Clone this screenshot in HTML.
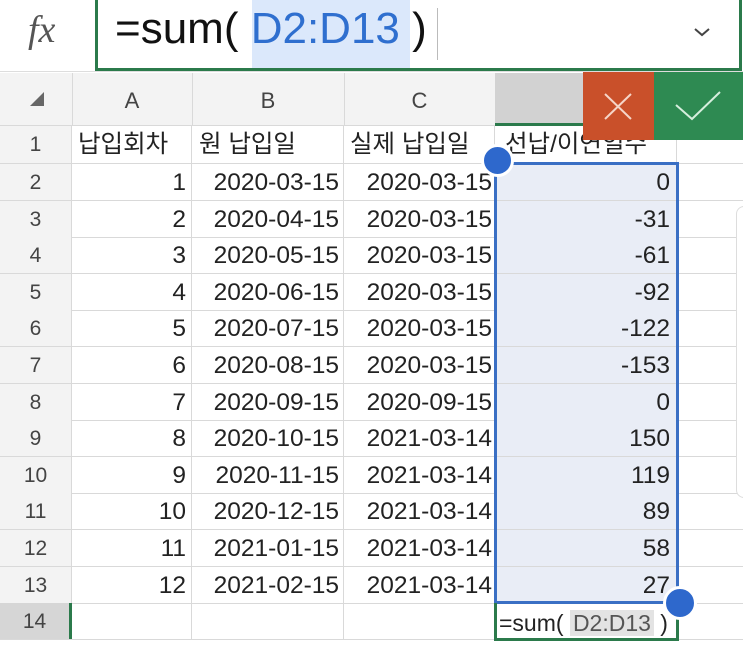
<!DOCTYPE html>
<html><head><meta charset="utf-8"><style>
*{margin:0;padding:0;box-sizing:border-box}
body{width:743px;height:646px;overflow:hidden;background:#fff;position:relative;font-family:"Liberation Sans","Noto Sans CJK KR",sans-serif;color:#222}
.a{position:absolute}
.row{position:absolute;left:0;width:743px;height:37px;border-bottom:1px solid #d9d9d9}
.c{position:absolute;top:0;height:100%;border-right:1px solid #d9d9d9;font-size:24.5px;line-height:37px;white-space:nowrap;overflow:visible}
.h{left:0;width:72px;background:#f3f3f3;text-align:center;color:#444;font-size:21px}
.A{left:72px;width:120px;text-align:right;padding-right:5px}
.B{left:192px;width:152px;text-align:right;padding-right:4px}
.C{left:344px;width:151px;text-align:right;padding-right:2px}
.D{left:495px;width:182px;text-align:right;padding-right:6px;background:#e9edf6}
</style></head><body>
<!-- formula bar -->
<div class="a" style="left:0;top:0;width:743px;height:72px;background:#fff;border-bottom:1px solid #ddd"></div>
<div class="a" style="left:28px;top:8px;font-family:'Liberation Serif',serif;font-style:italic;font-size:38px;color:#555">fx</div>
<div class="a" style="left:95px;top:-4px;width:647px;height:75px;border:3px solid #2b7a4b;background:#fff"></div>
<div class="a" style="left:252px;top:0;width:158px;height:68px;background:#dbe8fb"></div>
<div class="a" style="left:115px;top:3px;font-size:44px;line-height:52px;color:#111">=sum( <span style="color:#2f6fcf">D2:D13</span> )</div>
<div class="a" style="left:437px;top:8px;width:1px;height:52px;background:#bbb"></div>
<svg class="a" style="left:690px;top:24px" width="24" height="16"><path d="M5 5 L12 11 L19 5" stroke="#444" stroke-width="2" fill="none"/></svg>
<!-- column headers -->
<div class="a" style="left:0;top:73px;width:743px;height:53px;background:#f3f3f3;border-bottom:1px solid #d9d9d9"></div>
<svg class="a" style="left:28px;top:90px" width="20" height="20"><path d="M2 16 L16 16 L16 2 Z" fill="#666"/></svg>
<div class="a" style="left:72px;top:73px;width:1px;height:53px;background:#d9d9d9"></div>
<div class="a" style="left:192px;top:73px;width:1px;height:53px;background:#d9d9d9"></div>
<div class="a" style="left:344px;top:73px;width:1px;height:53px;background:#d9d9d9"></div>
<div class="a" style="left:72px;top:88px;width:120px;text-align:center;font-size:22px;color:#444">A</div>
<div class="a" style="left:192px;top:88px;width:152px;text-align:center;font-size:22px;color:#444">B</div>
<div class="a" style="left:344px;top:88px;width:151px;text-align:center;font-size:22px;color:#444">C</div>
<div class="a" style="left:495px;top:73px;width:90px;height:53px;background:#d2d2d2"></div>
<div class="a" style="left:495px;top:123px;width:182px;height:3px;background:#2b7a4b"></div>
<!-- row 1 -->
<div class="row" style="top:126px;height:38px">
<div class="c h">1</div><div class="c A" style="text-align:left;padding-left:6px">납입회차</div><div class="c B" style="text-align:left;padding-left:7px">원 납입일</div><div class="c C" style="text-align:left;padding-left:6px">실제 납입일</div><div class="c" style="left:495px;width:182px;padding-left:10px">선납/이연일수</div>
</div>
<div class="row" style="top:164px"><div class="c h">2</div><div class="c A">1</div><div class="c B">2020-03-15</div><div class="c C">2020-03-15</div><div class="c D">0</div></div>
<div class="row" style="top:200.6px"><div class="c h">3</div><div class="c A">2</div><div class="c B">2020-04-15</div><div class="c C">2020-03-15</div><div class="c D">-31</div></div>
<div class="row" style="top:237.2px"><div class="c h">4</div><div class="c A">3</div><div class="c B">2020-05-15</div><div class="c C">2020-03-15</div><div class="c D">-61</div></div>
<div class="row" style="top:273.8px"><div class="c h">5</div><div class="c A">4</div><div class="c B">2020-06-15</div><div class="c C">2020-03-15</div><div class="c D">-92</div></div>
<div class="row" style="top:310.4px"><div class="c h">6</div><div class="c A">5</div><div class="c B">2020-07-15</div><div class="c C">2020-03-15</div><div class="c D">-122</div></div>
<div class="row" style="top:347px"><div class="c h">7</div><div class="c A">6</div><div class="c B">2020-08-15</div><div class="c C">2020-03-15</div><div class="c D">-153</div></div>
<div class="row" style="top:383.6px"><div class="c h">8</div><div class="c A">7</div><div class="c B">2020-09-15</div><div class="c C">2020-09-15</div><div class="c D">0</div></div>
<div class="row" style="top:420.2px"><div class="c h">9</div><div class="c A">8</div><div class="c B">2020-10-15</div><div class="c C">2021-03-14</div><div class="c D">150</div></div>
<div class="row" style="top:456.8px"><div class="c h">10</div><div class="c A">9</div><div class="c B">2020-11-15</div><div class="c C">2021-03-14</div><div class="c D">119</div></div>
<div class="row" style="top:493.4px"><div class="c h">11</div><div class="c A">10</div><div class="c B">2020-12-15</div><div class="c C">2021-03-14</div><div class="c D">89</div></div>
<div class="row" style="top:530px"><div class="c h">12</div><div class="c A">11</div><div class="c B">2021-01-15</div><div class="c C">2021-03-14</div><div class="c D">58</div></div>
<div class="row" style="top:566.6px"><div class="c h">13</div><div class="c A">12</div><div class="c B">2021-02-15</div><div class="c C">2021-03-14</div><div class="c D">27</div></div>
<div class="row" style="top:603.2px"><div class="c h" style="background:#d6d6d6;border-right:3px solid #2b7a4b">14</div><div class="c A"></div><div class="c B"></div><div class="c C"></div><div class="c" style="left:495px;width:182px"></div></div>
<!-- selection -->
<div class="a" style="left:494px;top:162px;width:185px;height:442px;border:3px solid #3a6fc4"></div>
<div class="a" style="left:494px;top:603px;width:185px;height:38px;border:3px solid #2b7a4b;border-top:none"></div>
<div class="a" style="left:499px;top:606px;font-size:23px;line-height:34px">=sum( <span style="background:#e3e3e3;color:#555;padding:0 3px">D2:D13</span> )</div>
<div class="a" style="left:481px;top:144px;width:33px;height:33px;border-radius:50%;background:#2e68cc;border:3px solid #fff"></div>
<div class="a" style="left:663px;top:586px;width:34px;height:34px;border-radius:50%;background:#2e68cc;border:3px solid #fff"></div>
<!-- scrollbar -->
<div class="a" style="left:736px;top:206px;width:30px;height:292px;border:1px solid #ddd;border-radius:8px;background:#fff"></div>
<!-- buttons -->
<div class="a" style="left:583px;top:72px;width:71px;height:68px;background:#c9502a"></div>
<svg class="a" style="left:583px;top:72px" width="71" height="68"><path d="M22 22 L48 47 M48 22 L22 47" stroke="#f5d5c8" stroke-width="2"/></svg>
<div class="a" style="left:654px;top:72px;width:89px;height:68px;background:#2e8a52"></div>
<svg class="a" style="left:654px;top:72px" width="89" height="68"><path d="M22 33 L38 47 L66 20" stroke="#d6eedd" stroke-width="2" fill="none"/></svg>
</body></html>
